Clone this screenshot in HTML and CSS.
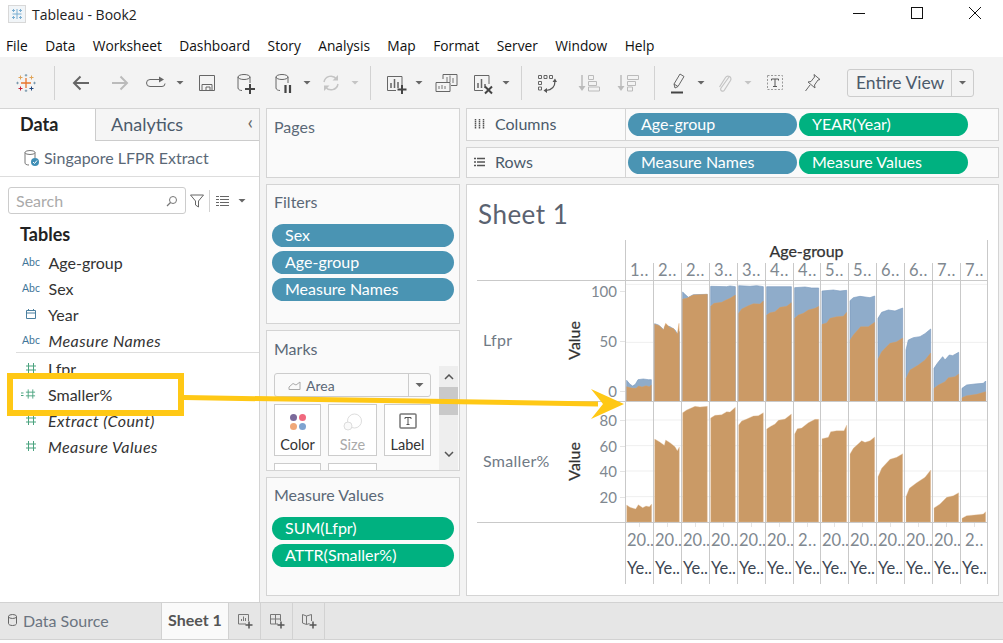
FILE: index.html
```html
<!DOCTYPE html>
<html lang="en">
<head>
    <meta charset="UTF-8">
    <meta name="viewport" content="width=device-width, initial-scale=1.0">
    <title>Tableau - Book2</title>
    <link rel="stylesheet" href="styles.css">
</head>
<body>
    <svg class="defs" width="0" height="0">
        <symbol id="hash" viewBox="0 0 12 12"><path d="M3.5 1v10M8.5 1v10M1 4h10M1 8h10" fill="none" stroke="currentColor"/></symbol>
    </svg>

    <header class="titlebar">
        <div class="app-name">
            <svg class="app-icon" width="18" height="18" viewBox="0 0 18 18">
                <rect x=".5" y=".5" width="17" height="17" fill="#f1f5f8" stroke="#d8d8d8"/>
                <path d="M9 4v10M4.500 9h9M5.500 4v3M4 5.500h3M12.500 4v3M11 5.500h3M5.500 11v3M4 12.500h3M12.500 11v3M11 12.500h3" fill="none" stroke="#79aed2"/>
            </svg>
            <span>Tableau - Book2</span>
        </div>
        <div class="win-controls">
            <svg width="12" height="12" viewBox="0 0 12 12"><path d="M0 6.500h12" stroke="#111"/></svg>
            <svg width="12" height="12" viewBox="0 0 12 12"><rect x=".5" y=".5" width="11" height="11" fill="none" stroke="#111"/></svg>
            <svg width="12" height="12" viewBox="0 0 12 12"><path d="M0 0l12 12M12 0L0 12" stroke="#111"/></svg>
        </div>
    </header>

    <nav class="menubar">
        <span>File</span><span>Data</span><span>Worksheet</span><span>Dashboard</span><span>Story</span><span>Analysis</span><span>Map</span><span>Format</span><span>Server</span><span>Window</span><span>Help</span>
    </nav>

    <div class="toolbar">
        <div class="tb-group tb-logo">
            <svg class="tool" viewBox="0 0 36 24">
                <path d="M18 7v10M13 12h10" stroke="#e8762c" stroke-width="1.300"/>
                <path d="M12.500 4.500v4M10.500 6.500h4M23.500 4.500v4M21.500 6.500h4" stroke="#e0a458"/>
                <path d="M12.500 15.500v4M10.500 17.500h4" stroke="#c72035"/>
                <path d="M23.500 15.500v4M21.500 17.500h4" stroke="#1f447a"/>
                <path d="M18 3v2.500M16.750 4.250h2.500M18 18.500V21M16.750 19.750h2.500M9.500 10.750v2.500M8.250 12h2.500M26.500 10.750v2.500M25.250 12h2.500" stroke="#7a99ac"/>
            </svg>
        </div>
        <div class="tb-group first">
            <svg class="tool" viewBox="0 0 36 24"><path d="M26 12H11M17.500 5.500L11 12l6.500 6.500" fill="none" stroke="#666" stroke-width="2"/></svg>
            <svg class="tool sp3" viewBox="0 0 36 24"><path d="M10 12h15M18.500 5.500L25 12l-6.500 6.500" fill="none" stroke="#bbb" stroke-width="2"/></svg>
            <svg class="tool" viewBox="0 0 36 24"><path d="M21 8.500h-9a3.500 3.500 0 0 0 0 7h12a3 3 0 0 0 3-3" fill="none" stroke="#666"/><path d="M21 5.500l5 3-5 3z" fill="#666"/></svg>
            <i class="caret"></i>
            <svg class="tool sp3" viewBox="0 0 36 24"><path d="M10.500 4.500h15v15h-15z" fill="none" stroke="#666"/><path d="M13 19v-5.500h10V19M17 19v-3h4v3" fill="none" stroke="#666"/></svg>
            <svg class="tool sp2" viewBox="0 0 36 24"><ellipse cx="17" cy="6" rx="6" ry="2.500" fill="none" stroke="#666"/><path d="M11 6v11c0 1.500 2 2.500 4 2.500M23 6v6" fill="none" stroke="#666"/><path d="M23 13v10M18 18h10" stroke="#444" stroke-width="2"/></svg>
            <svg class="tool sp2" viewBox="0 0 36 24"><ellipse cx="17" cy="6" rx="6" ry="2.500" fill="none" stroke="#666"/><path d="M11 6v11c0 1.500 2 2.500 4 2.500M23 6v6" fill="none" stroke="#666"/><path d="M20.500 14v8M25 14v8" stroke="#444" stroke-width="2.200"/></svg>
            <i class="caret"></i>
            <svg class="tool" viewBox="0 0 36 24"><path d="M11 11a7 7 0 0 1 12.500-3M25 13a7 7 0 0 1-12.500 3" fill="none" stroke="#c4c4c4" stroke-width="1.500"/><path d="M25 4v5.500h-5.500zM11 20v-5.500h5.500z" fill="#c4c4c4"/></svg>
            <i class="caret off"></i>
        </div>
        <div class="tb-group">
            <svg class="tool" viewBox="0 0 36 24"><path d="M25 14V5.500H10.500v14H19" fill="none" stroke="#666"/><path d="M14 17v-5M17.500 17V8M21 17v-6" stroke="#666" stroke-width="1.500"/><path d="M25 14v9M20.500 18.500h9" stroke="#444" stroke-width="2"/></svg>
            <i class="caret"></i>
            <svg class="tool sp2" viewBox="0 0 36 24"><path d="M16 8V3.500h14v11h-6M9 11.500h14v9H9z" fill="#f3f3f3" stroke="#666"/><path d="M20 6v5M23 4.500V11M26 7v5M12 18v-3M15 18v-4M18 18v-3" stroke="#777"/></svg>
            <svg class="tool sp1" viewBox="0 0 36 24"><path d="M25 13V4.500H10.500v15H19" fill="none" stroke="#666"/><path d="M14 17v-5M17.500 17V8M21 17v-4" stroke="#666" stroke-width="1.500"/><path d="M21 15.500l7 7M28 15.500l-7 7" stroke="#444" stroke-width="2"/></svg>
            <i class="caret"></i>
        </div>
        <div class="tb-group">
            <svg class="tool" viewBox="0 0 36 24"><path d="M10.500 4.500h3v3h-3zM16 4.500h3v3h-3zM21.500 4.500h3v3h-3zM10.500 10.500h3v3h-3zM10.500 16h3v3h-3z" fill="none" stroke="#666"/><path d="M27 10c0 5-3 9-9 9.500" fill="none" stroke="#555" stroke-width="1.200"/><path d="M24.500 11l2.500-3.500 2 3.500zM19 17v5l-3.500-2.500z" fill="#555"/></svg>
            <svg class="tool sp5" viewBox="0 0 36 24"><path d="M12 4v13" stroke="#bbb" stroke-width="1.500"/><path d="M8.500 15h7L12 20z" fill="#bbb"/><path d="M18.500 4.500h5v4h-5zM18.500 10.500h8v4h-8zM18.500 16h11v4h-11z" fill="none" stroke="#bbb"/></svg>
            <svg class="tool sp3" viewBox="0 0 36 24"><path d="M12 4v13" stroke="#bbb" stroke-width="1.500"/><path d="M8.500 15h7L12 20z" fill="#bbb"/><path d="M18.500 4.500h11v4h-11zM18.500 10.500h8v4h-8zM18.500 16h5v4h-5z" fill="none" stroke="#bbb"/></svg>
        </div>
        <div class="tb-group no-line">
            <svg class="tool" viewBox="0 0 36 24"><path d="M14 17l-1-4 6-10 4 2.500-6 10zM13 13l4 2.500" fill="none" stroke="#666"/><path d="M10 21.500h12" stroke="#444" stroke-width="2"/></svg>
            <i class="caret tuck"></i>
            <svg class="tool" viewBox="0 0 36 24"><path d="M23 6L15 17c-1.500 2.500 2 4.500 3.500 2l6-9.500c2-3.500-3-6-5-3l-6 9.500" fill="none" stroke="#c4c4c4" stroke-width="1.200"/></svg>
            <i class="caret off"></i>
            <svg class="tool sp3" viewBox="0 0 36 24"><rect x="10.500" y="4.500" width="15" height="14" fill="none" stroke="#999" stroke-dasharray="2 1.500"/><path d="M14.500 9.500v-1.500h7v1.500M18 8v7.500M16 15.500h4" fill="none" stroke="#555"/></svg>
            <svg class="tool sp1" viewBox="0 0 36 24"><path d="M20 3.500l6 5-2 .5-3.500 5 .5 3-7-6 3-.5 3.500-4.500zM16 14l-4.500 6" fill="none" stroke="#666"/></svg>
        </div>
        <div class="combo">
            <span class="combo-text">Entire View</span>
            <span class="combo-btn"><i class="caret"></i></span>
        </div>
    </div>

    <main class="workspace">
        <aside class="data-pane">
            <div class="tabs">
                <div class="tab active">Data</div>
                <div class="tab">Analytics<span class="collapse">&#8249;</span></div>
            </div>
            <div class="source">
                <svg width="16" height="18" viewBox="0 0 16 18"><ellipse cx="6" cy="3.500" rx="5" ry="2" fill="none" stroke="#777"/><path d="M1 3.500V14c0 1 1.500 2 4 2M11 3.500V9" fill="none" stroke="#777"/><circle cx="11" cy="13" r="4" fill="#3f8eb5"/><path d="M9 13l1.500 1.500L13 11.500" fill="none" stroke="#fff"/></svg>
                <span>Singapore LFPR Extract</span>
            </div>
            <div class="search-row">
                <div class="search">
                    <span>Search</span>
                    <svg width="12" height="12" viewBox="0 0 12 12"><circle cx="7" cy="5" r="3.500" fill="none" stroke="#777"/><path d="M4.500 7.500L1 11" stroke="#777" stroke-width="1.300"/></svg>
                </div>
                <svg class="funnel" width="14" height="14" viewBox="0 0 14 14"><path d="M.5 1h13L8.500 7v6l-3-2V7z" fill="none" stroke="#666"/></svg>
                <span class="sep"></span>
                <svg class="list-icon" width="13" height="10" viewBox="0 0 13 10"><path d="M0 .5h3M4 .5h9M0 3.500h3M4 3.500h9M0 6.500h3M4 6.500h9M0 9.500h3M4 9.500h9" stroke="#666"/></svg>
                <i class="caret"></i>
            </div>
            <h2 class="tables">Tables</h2>
            <ul class="fields">
                <li><b class="abc">Abc</b>Age-group</li>
                <li><b class="abc">Abc</b>Sex</li>
                <li><svg class="f-icon" width="12" height="12" viewBox="0 0 12 12"><path d="M1.500 2.500h9v8h-9zM1.500 5h9M3.500 1v2M8.500 1v2" fill="none" stroke="#4a7f9f"/></svg>Year</li>
                <li class="it divided"><b class="abc">Abc</b>Measure Names</li>
                <li><svg class="f-icon hash" width="12" height="12"><use href="#hash"/></svg>Lfpr</li>
                <li><svg class="f-icon hash calc" width="15" height="12" viewBox="0 0 15 12"><path d="M0 5h2.500M0 7.500h2.500" stroke="currentColor"/><use href="#hash" x="4" width="11" height="12"/></svg>Smaller%</li>
                <li class="it"><svg class="f-icon hash" width="12" height="12"><use href="#hash"/></svg>Extract (Count)</li>
                <li class="it"><svg class="f-icon hash" width="12" height="12"><use href="#hash"/></svg>Measure Values</li>
            </ul>
        </aside>

        <section class="cards">
            <div class="card pages"><h3>Pages</h3></div>
            <div class="card filters">
                <h3>Filters</h3>
                <div class="pill blue">Sex</div>
                <div class="pill blue">Age-group</div>
                <div class="pill blue">Measure Names</div>
            </div>
            <div class="card marks">
                <h3>Marks</h3>
                <div class="marks-body">
                    <div class="marks-main">
                        <div class="mark-select">
                            <svg width="14" height="12" viewBox="0 0 14 12"><path d="M1 10.500h11V3L8 6 5 4.500 1 8z" fill="none" stroke="#aaa"/></svg>
                            <span>Area</span>
                            <span class="mark-btn"><i class="caret"></i></span>
                        </div>
                        <div class="mark-grid">
                            <div class="mark-card">
                                <svg width="18" height="18" viewBox="0 0 18 18"><circle cx="4.500" cy="4.500" r="3.500" fill="#7b6a9b"/><circle cx="13.500" cy="4.500" r="3.500" fill="#f0697e"/><circle cx="4.500" cy="13.500" r="3.500" fill="#f0a878"/><circle cx="13.500" cy="13.500" r="3.500" fill="#7ea3d0"/></svg>
                                <span>Color</span>
                            </div>
                            <div class="mark-card off">
                                <svg width="20" height="18" viewBox="0 0 20 18"><circle cx="11.500" cy="8" r="7" fill="none" stroke="#ddd"/><circle cx="5" cy="13" r="4" fill="#fafafa" stroke="#ddd"/></svg>
                                <span>Size</span>
                            </div>
                            <div class="mark-card">
                                <svg width="18" height="18" viewBox="0 0 18 18"><rect x="1" y="1" width="16" height="14" rx="1" fill="none" stroke="#777" stroke-width="1.500"/><path d="M6 6V4.500h6V6M9 4.500v7M7.500 11.500h3" fill="none" stroke="#555"/></svg>
                                <span>Label</span>
                            </div>
                            <div class="mark-card"></div>
                            <div class="mark-card"></div>
                        </div>
                    </div>
                    <div class="scroll">
                        <svg width="10" height="6" viewBox="0 0 10 6"><path d="M1 5l4-4 4 4" fill="none" stroke="#555" stroke-width="1.500"/></svg>
                        <div class="thumb"></div>
                        <svg width="10" height="6" viewBox="0 0 10 6"><path d="M1 1l4 4 4-4" fill="none" stroke="#555" stroke-width="1.500"/></svg>
                    </div>
                </div>
            </div>
            <div class="card values">
                <h3>Measure Values</h3>
                <div class="pill green">SUM(Lfpr)</div>
                <div class="pill green">ATTR(Smaller%)</div>
            </div>
        </section>

        <section class="sheet-col">
            <div class="shelf columns">
                <div class="shelf-name"><svg width="11" height="10" viewBox="0 0 11 10"><path d="M1.500 0v10M5.500 0v10M9.500 0v10" stroke="#555" stroke-width="1.500" stroke-dasharray="1.500 .5"/></svg>Columns</div>
                <div class="pill blue">Age-group</div>
                <div class="pill green">YEAR(Year)</div>
            </div>
            <div class="shelf rows">
                <div class="shelf-name"><svg width="11" height="10" viewBox="0 0 11 10"><path d="M0 1.500h2M3 1.500h8M0 5h2M3 5h8M0 8.500h2M3 8.500h8" stroke="#555" stroke-width="1.300"/></svg>Rows</div>
                <div class="pill blue">Measure Names</div>
                <div class="pill green">Measure Values</div>
            </div>
            <div class="view">
                <h1>Sheet 1</h1>
                <div class="viz">
                    <div class="corner"></div>
                    <div class="age-title">Age-group</div>
                    <div class="corner line"></div>
                    <div class="head-cells ages">
                        <span>1..</span><span>2..</span><span>2..</span><span>3..</span><span>3..</span><span>4..</span><span>4..</span><span>5..</span><span>5..</span><span>6..</span><span>6..</span><span>7..</span><span>7..</span>
                    </div>

                    <div class="row-head">
                        <span class="row-name">Lfpr</span>
                        <span class="axis-title">Value</span>
                        <div class="axis lfpr-axis"><span>100</span><span>50</span><span>0</span></div>
                    </div>
                    <svg class="pane" width="364" height="121" viewBox="15 138 1092 363">
                        <path class="grid" d="M15 148h1088M15 322h1088"/>
                        <g class="blue-area">
                            <path d="M20 498V436L30 448 38 453 46 448 54 434 70 432 85 434 94 434V498Z"/>
                            <path d="M104 498V266L115 270 125 278 132 286 136 272 150 275 165 285 172 296 178 290V498Z"/>
                            <path d="M188 498V171L195 178 205 187 220 179 262 178V498Z"/>
                            <path d="M272 498V154L320 155 330 153 346 155V498Z"/>
                            <path d="M356 498V152L390 154 410 152 430 155V498Z"/>
                            <path d="M440 498V155H514V498Z"/>
                            <path d="M524 498V158L555 156 575 159 596 159V498Z"/>
                            <path d="M606 498V168L640 165 660 168 680 166V498Z"/>
                            <path d="M690 498V197L700 188 720 184 750 188 764 183V498Z"/>
                            <path d="M774 498V250L785 232 805 225 825 228 848 219V498Z"/>
                            <path d="M858 498V345L865 315 880 308 900 305 915 296 932 282V498Z"/>
                            <path d="M942 498V400L952 385 968 365 975 375 988 360 998 362 1016 352V498Z"/>
                            <path d="M1026 498V460L1040 450 1065 447 1090 445 1097 438V498Z"/>
                        </g>
                        <g class="orange-area">
                            <path d="M20 498V455L35 459 48 460 56 453 66 456 78 452 88 455 94 450V498Z"/>
                            <path d="M104 498V268L118 272 130 285 137 265 150 278 160 280 168 292 172 298 177 265 178 300V498Z"/>
                            <path d="M188 498V192L200 190 220 180 262 178V498Z"/>
                            <path d="M272 498V214L282 205 305 202 318 195 330 190 346 180V498Z"/>
                            <path d="M356 498V235L365 222 385 212 400 206 420 207 430 198V498Z"/>
                            <path d="M440 498V240L450 233 465 230 480 217 500 214 514 203V498Z"/>
                            <path d="M524 498V250L535 240 550 235 565 225 585 220 596 214V498Z"/>
                            <path d="M606 498V268L620 264 630 250 650 245 670 244 680 232V498Z"/>
                            <path d="M690 498V315L700 300 722 275 745 275 764 262V498Z"/>
                            <path d="M774 498V372L785 350 810 325 830 320 848 309V498Z"/>
                            <path d="M858 498V430L870 405 895 390 915 375 932 354V498Z"/>
                            <path d="M942 498V460L955 450 975 440 985 428 1005 425 1016 417V498Z"/>
                            <path d="M1026 498V488L1040 482 1070 478 1097 470V498Z"/>
                        </g>
                        <path class="col-lines" d="M16.500 138V501M100.500 138V501M184.500 138V501M268.500 138V501M352.500 138V501M436.500 138V501M520.500 138V501M601.500 138V501M685.500 138V501M769.500 138V501M853.500 138V501M937.500 138V501M1021.500 138V501M1102.500 138V501M15 499.500H1104"/>
                    </svg>

                    <div class="row-head">
                        <span class="row-name">Smaller%</span>
                        <span class="axis-title">Value</span>
                        <div class="axis smaller-axis"><span>80</span><span>60</span><span>40</span><span>20</span></div>
                    </div>
                    <svg class="pane" width="364" height="121" viewBox="15 6 1092 363">
                        <path class="grid" d="M15 60h1088M15 137h1088M15 213h1088M15 290h1088"/>
                        <g class="orange-area solo">
                            <path d="M20 366V315L30 322 47 327 55 314 68 323 78 318 88 320 95 312V366Z"/>
                            <path d="M104 366V117L118 125 133 136 137 120 150 128 165 140 172 152 178 141V366Z"/>
                            <path d="M188 366V38L200 30 225 19 240 21 262 19V366Z"/>
                            <path d="M272 366V54L285 46 305 44 320 35 330 36 346 22V366Z"/>
                            <path d="M356 366V75L365 63 380 57 400 48 415 47 430 38V366Z"/>
                            <path d="M440 366V87L450 80 465 72 475 61 495 57 514 42V366Z"/>
                            <path d="M524 366V102L532 86 545 84 565 68 585 58 596 58V366Z"/>
                            <path d="M606 366V116L625 112 632 95 650 92 672 92 680 75V366Z"/>
                            <path d="M690 366V162L700 145 725 122 735 127 750 122 764 111V366Z"/>
                            <path d="M774 366V230L785 205 810 178 830 172 848 161V366Z"/>
                            <path d="M858 366V290L868 265 890 248 915 232 932 210V366Z"/>
                            <path d="M942 366V324L960 312 980 292 1000 287 1016 278V366Z"/>
                            <path d="M1026 366V355L1040 347 1070 344 1090 342 1097 335V366Z"/>
                        </g>
                        <path class="col-lines" d="M16.500 6V369M100.500 6V369M184.500 6V369M268.500 6V369M352.500 6V369M436.500 6V369M520.500 6V369M601.500 6V369M685.500 6V369M769.500 6V369M853.500 6V369M937.500 6V369M1021.500 6V369M1102.500 6V369M15 367.500H1104"/>
                    </svg>

                    <div class="corner"></div>
                    <div class="head-cells years ticks">
                        <span>20..</span><span>20..</span><span>20..</span><span>20..</span><span>20..</span><span>20..</span><span class="short">2..</span><span>20..</span><span>20..</span><span>20..</span><span>20..</span><span>20..</span><span class="short">2..</span>
                    </div>
                    <div class="corner"></div>
                    <div class="head-cells years dark">
                        <span>Ye..</span><span>Ye..</span><span>Ye..</span><span>Ye..</span><span>Ye..</span><span>Ye..</span><span>Ye..</span><span>Ye..</span><span>Ye..</span><span>Ye..</span><span>Ye..</span><span>Ye..</span><span>Ye..</span>
                    </div>
                </div>
            </div>
        </section>
    </main>

    <footer class="sheet-tabs">
        <div class="ds-tab">
            <svg width="9" height="12" viewBox="0 0 9 12"><ellipse cx="4.500" cy="2.500" rx="4" ry="2" fill="none" stroke="#666"/><path d="M.5 2.500v7c0 1 1.500 2 4 2s4-1 4-2v-7" fill="none" stroke="#666"/></svg>
            Data Source
        </div>
        <div class="sheet-tab">Sheet 1</div>
        <div class="new-tab"><svg width="16" height="16" viewBox="0 0 16 16"><path d="M9 11H1.500V1.500h10V8" fill="none" stroke="#777"/><path d="M4.500 8V6M6.500 8V3.500M8.500 8V5" stroke="#777"/><path d="M12 8.500v7M8.500 12h7" stroke="#555" stroke-width="1.500"/></svg></div>
        <div class="new-tab"><svg width="16" height="16" viewBox="0 0 16 16"><path d="M9 11H1.500V1.500h10V8M1.500 6h10M6.500 1.500V11" fill="none" stroke="#777"/><path d="M12 8.500v7M8.500 12h7" stroke="#555" stroke-width="1.500"/></svg></div>
        <div class="new-tab"><svg width="16" height="16" viewBox="0 0 16 16"><path d="M1.500 1.500L5.500 3l5-1.500V8M1.500 1.500V10l4 1.500 3-1M5.500 3v8.500" fill="none" stroke="#777"/><path d="M12 8.500v7M8.500 12h7" stroke="#555" stroke-width="1.500"/></svg></div>
    </footer>

    <!-- annotation drawn on top of the screenshot -->
    <div class="callout"></div>
    <svg class="arrow" width="1003" height="643" viewBox="0 0 1003 643">
        <path d="M184 395L598 401.500V406.500L184 400Z" fill="#ffc815"/>
        <path d="M591 389L624 404 591 419 603 404Z" fill="#ffc815"/>
    </svg>
</body>
</html>
```
FILE: styles.css
```css
* {
    box-sizing: border-box;
}
html, body {
    margin: 0;
    height: 643px;
    overflow: hidden;
}
body {
    position: relative;
    display: flex;
    flex-direction: column;
    background-color: #fff;
    font-family: "Lato", "Liberation Sans", sans-serif;
    font-size: 16px;
    color: #444;
}
.defs {
    position: absolute;
}
h1, h2, h3, ul {
    margin: 0;
    padding: 0;
    font-weight: normal;
}

/* window chrome */
.titlebar {
    height: 34px;
    flex: none;
    display: flex;
    justify-content: space-between;
    align-items: center;
    padding: 0 22px 6px 8px;
    font-family: "Open Sans", sans-serif;
    font-size: 14px;
    color: #222;
}
.app-name {
    display: flex;
    align-items: center;
    gap: 6px;
}
.win-controls {
    display: flex;
    gap: 46px;
    margin-top: -2px;
}
.menubar {
    height: 23px;
    flex: none;
    display: flex;
    gap: 17.400px;
    padding-left: 6px;
    font-family: "Open Sans", sans-serif;
    font-size: 13.750px;
    line-height: 23px;
    color: #111;
}

/* toolbar */
.toolbar {
    height: 51px;
    flex: none;
    display: flex;
    align-items: center;
    background-color: #f3f3f3;
}
.tb-group {
    height: 34px;
    display: flex;
    align-items: center;
    padding: 0 9px 0 6px;
    border-right: 1px solid #d2d2d2;
}
.tb-group.first {
    padding-left: 8px;
}
.tb-group.no-line {
    border-right: 0;
}
.tb-logo {
    width: 55px;
    padding: 0 0 0 8px;
}
.tool {
    width: 36px;
    height: 24px;
    flex: none;
}
.sp1 { margin-left: 1px; }
.sp2 { margin-left: 2px; }
.sp3 { margin-left: 3px; }
.sp5 { margin-left: 6px; }
.caret {
    display: inline-block;
    width: 12px;
    height: 4px;
    flex: none;
    clip-path: polygon(2px 0, 10px 0, 6px 4px);
    background: #666;
}
.caret.off {
    background: #c4c4c4;
}
.caret.tuck {
    margin: 0 -1px 0 -2px;
}
.combo {
    width: 127px;
    height: 28px;
    margin-left: 8px;
    display: flex;
    align-items: center;
    border: 1px solid #ccc;
    border-radius: 3px;
    font-size: 17.500px;
    color: #4b5a6b;
}
.combo-text {
    flex: 1;
    padding-left: 8px;
}
.combo-btn {
    width: 22px;
    height: 100%;
    display: flex;
    align-items: center;
    justify-content: center;
    border-left: 1px solid #ccc;
}

/* main area */
.workspace {
    height: 494px;
    flex: none;
    display: flex;
    background-color: #f3f3f3;
}
.data-pane {
    width: 260px;
    flex: none;
    background-color: #fff;
    border-top: 1px solid #d4d4d4;
    border-right: 1px solid #d4d4d4;
}
.tabs {
    display: flex;
    height: 32px;
}
.tab {
    position: relative;
    flex: 1;
    padding-left: 15px;
    background-color: #f5f5f5;
    border-bottom: 1px solid #ccc;
    border-left: 1px solid #ccc;
    font-size: 18px;
    line-height: 31px;
    color: #4b5a6b;
}
.tab.active {
    flex: none;
    width: 95px;
    padding-left: 20px;
    background-color: #fff;
    border: 0;
    font-weight: bold;
    font-size: 18px;
    color: #222;
}
.collapse {
    position: absolute;
    right: 6px;
    top: -3px;
    font-size: 20px;
    color: #666;
}
.source {
    height: 36px;
    display: flex;
    align-items: center;
    gap: 4px;
    padding: 0 0 2px 24px;
    border-bottom: 1px solid #ddd;
    color: #5a6877;
}
.search-row {
    display: flex;
    align-items: center;
    height: 27px;
    margin-top: 10px;
    padding-left: 8px;
}
.search {
    width: 178px;
    height: 27px;
    display: flex;
    align-items: center;
    justify-content: space-between;
    padding: 0 7px 0 7px;
    border: 1px solid #ccc;
    border-radius: 3px;
    color: #aaa;
}
.funnel {
    margin-left: 4px;
}
.sep {
    width: 1px;
    height: 22px;
    margin-left: 5px;
    background-color: #d2d2d2;
}
.list-icon {
    margin-left: 6px;
}
.search-row .caret {
    margin-left: 7px;
}
.tables {
    margin: 8px 0 0 20px;
    font-size: 18px;
    font-weight: bold;
    line-height: 24px;
    color: #222;
}
.fields {
    list-style: none;
    margin-top: 3px;
}
.fields li {
    height: 26px;
    display: flex;
    align-items: center;
    padding-left: 22px;
    color: #333;
}
.fields li.it {
    font-style: italic;
    letter-spacing: .45px;
}
.fields li.divided {
    position: relative;
    margin-bottom: 2px;
}
.fields li.divided::after {
    content: "";
    position: absolute;
    left: 16px;
    right: 0;
    bottom: 0;
    border-bottom: 1px solid #ddd;
}
.abc {
    width: 26.500px;
    font-size: 10.500px;
    font-weight: normal;
    font-style: normal;
    letter-spacing: 0;
    color: #3f7598;
}
.f-icon {
    width: 12px;
    margin: 0 11px 0 3px;
    flex: none;
}
.hash {
    color: #4aa37f;
}
.hash.calc {
    width: 15px;
    margin: 0 12px 0 -1px;
}

/* middle cards */
.cards {
    width: 194px;
    flex: none;
    margin-left: 6px;
    display: flex;
    flex-direction: column;
    gap: 6px;
    padding-bottom: 6px;
}
.card {
    background-color: #fafafa;
    border: 1px solid #d4d4d4;
    padding: 0 5px;
    overflow: hidden;
}
.card h3 {
    font-size: 16px;
    line-height: 20px;
    margin: 7px 0 12px;
    padding-left: 2px;
    color: #5a6877;
}
.pages { height: 70px; }
.filters { height: 140px; }
.marks { height: 141px; }
.values { flex: 1; }
.card.pages h3,
.card.marks h3 {
    margin-top: 8px;
}
.pill {
    height: 23px;
    margin-bottom: 4px;
    padding-left: 13px;
    border-radius: 12px;
    line-height: 21px;
    color: #fff;
}
.card .pill {
    width: 182px;
}
.blue { background-color: #4a94b3; }
.green { background-color: #00b180; }
.marks-body {
    display: flex;
    gap: 8px;
    margin-right: -4px;
    margin-left: 2px;
    margin-top: -5px;
}
.marks-main {
    width: 157px;
    padding-top: 7px;
    flex: none;
}
.mark-select {
    height: 24px;
    display: flex;
    align-items: center;
    gap: 4px;
    padding-left: 13px;
    border: 1px solid #ccc;
    border-radius: 3px;
    font-size: 14px;
    color: #5a6877;
}
.mark-btn {
    margin-left: auto;
    width: 22px;
    height: 100%;
    display: flex;
    align-items: center;
    justify-content: center;
    border-left: 1px solid #ccc;
}
.mark-grid {
    display: grid;
    grid-template-columns: 47px 49px 47px;
    gap: 7px;
    margin-top: 7px;
}
.mark-card {
    height: 52px;
    display: flex;
    flex-direction: column;
    align-items: center;
    gap: 5px;
    padding-top: 8px;
    background-color: #fff;
    border: 1px solid #ccc;
    font-size: 14.500px;
    color: #333;
}
.mark-card.off {
    color: #aaa;
}
.scroll {
    width: 19px;
    height: 110px;
    display: flex;
    flex-direction: column;
    align-items: center;
    padding-top: 8px;
    background-color: #eee;
}
.thumb {
    width: 19px;
    height: 28px;
    margin: 7px 0 36px;
    background-color: #c9c9c9;
}

/* shelves and the view */
.sheet-col {
    width: 533px;
    flex: none;
    margin-left: 6px;
    display: flex;
    flex-direction: column;
    gap: 6px;
    padding-bottom: 6px;
}
.shelf {
    display: flex;
    align-items: center;
    gap: 2px;
    background-color: #fafafa;
    border: 1px solid #d4d4d4;
}
.shelf.columns { height: 33px; }
.shelf.rows { height: 31px; }
.shelf .pill {
    width: 169px;
    margin: 0;
}
.shelf-name {
    width: 159px;
    height: 100%;
    display: flex;
    align-items: center;
    gap: 10px;
    padding: 0 0 2px 7px;
    border-right: 1px solid #d4d4d4;
    color: #4b5a6b;
}
.view {
    flex: 1;
    background-color: #fff;
    border: 1px solid #d4d4d4;
    padding-left: 10px;
}
.view h1 {
    height: 55px;
    padding: 13px 0 0 1px;
    font-size: 26px;
    line-height: 32px;
    letter-spacing: .5px;
    color: #5a6270;
}
.viz {
    display: grid;
    grid-template-columns: 148px 364px;
    grid-template-rows: 23px 18px 121px 121px 31px 30px;
}
.corner.line {
    border-bottom: 1px solid #c9c9c9;
}
.age-title {
    width: 363px;
    border-left: 1px solid #c9c9c9;
    border-right: 1px solid #c9c9c9;
    text-align: center;
    font-size: 16px;
    -webkit-text-stroke: .25px #333;
    line-height: 22px;
    color: #333;
}
.head-cells {
    width: 363px;
    display: grid;
    grid-template-columns: repeat(6, 28px) 27px repeat(5, 28px) 27px;
    border-right: 1px solid #c9c9c9;
}
.head-cells span {
    white-space: nowrap;
    padding-left: 1px;
    border-left: 1px solid #c9c9c9;
    font-size: 16.500px;
    color: #808890;
}
.head-cells.ages {
    border-bottom: 1px solid #c9c9c9;
}
.head-cells.ages span {
    padding-left: 4px;
    line-height: 15px;
    letter-spacing: .5px;
}
.head-cells.years span {
    padding-top: 5px;
    line-height: 24px;
}
.head-cells.years span.short {
    padding-left: 4px;
    letter-spacing: .5px;
}
.head-cells.ticks span {
    background: linear-gradient(#e4e4e4, #e4e4e4) 13px 0 / 1px 4px no-repeat;
}
.head-cells.dark span {
    color: #3c4654;
    padding-top: 2px;
}
.row-head {
    display: flex;
    align-items: stretch;
    border-bottom: 1px solid #c9c9c9;
}
.row-name {
    flex: 1;
    align-self: center;
    padding: 0 0 4px 6px;
    letter-spacing: .3px;
    color: #707a85;
}
.axis-title {
    align-self: center;
    margin-bottom: 2px;
    writing-mode: vertical-rl;
    transform: rotate(180deg);
    font-size: 16px;
    -webkit-text-stroke: .25px #333;
    color: #333;
}
.axis {
    width: 42px;
    display: flex;
    flex-direction: column;
    justify-content: space-between;
    align-items: flex-end;
    padding-right: 8px;
    line-height: 18px;
    font-size: 15px;
    color: #808890;
}
.axis span {
    position: relative;
}
.axis span::after {
    content: "";
    position: absolute;
    left: calc(100% + 3px);
    top: 9px;
    width: 5px;
    border-top: 1px solid #e4e4e4;
}
.lfpr-axis {
    padding-top: 1px;
    padding-bottom: 1px;
}
.smaller-axis {
    padding-top: 9px;
    padding-bottom: 16px;
}
.pane {
    display: block;
}
.grid {
    fill: none;
    stroke: #efefef;
    stroke-width: 3;
}
.blue-area path {
    fill: #8facca;
    stroke: #7c9cc0;
    stroke-width: 2;
}
.orange-area path {
    fill: #cb9a66;
    stroke: #e4a25e;
    stroke-width: 1;
}
.orange-area.solo path {
    fill: #ca9a66;
    stroke: #e8c9a6;
    stroke-width: 1;
}
.col-lines {
    fill: none;
    stroke: #c9c9c9;
    stroke-width: 3;
}

/* sheet tabs */
.sheet-tabs {
    height: 38px;
    flex: none;
    display: flex;
    background-color: #e6e6e6;
    border-top: 1px solid #d2d2d2;
    border-bottom: 1px solid #d2d2d2;
}
.ds-tab {
    width: 161px;
    display: flex;
    align-items: center;
    gap: 6px;
    padding: 0 0 2px 8px;
    color: #6b7480;
}
.sheet-tab {
    width: 68px;
    display: flex;
    align-items: center;
    justify-content: center;
    padding-bottom: 3px;
    background-color: #fafafa;
    border-left: 1px solid #d2d2d2;
    border-right: 1px solid #d2d2d2;
    font-weight: bold;
    color: #555;
}
.new-tab {
    width: 32px;
    display: flex;
    align-items: center;
    justify-content: center;
    border-right: 1px solid #d2d2d2;
}

/* callout over the page */
.callout {
    position: absolute;
    left: 7px;
    top: 373px;
    width: 177px;
    height: 43px;
    border: 6px solid #ffc815;
}
.arrow {
    position: absolute;
    left: 0;
    top: 0;
}
```
